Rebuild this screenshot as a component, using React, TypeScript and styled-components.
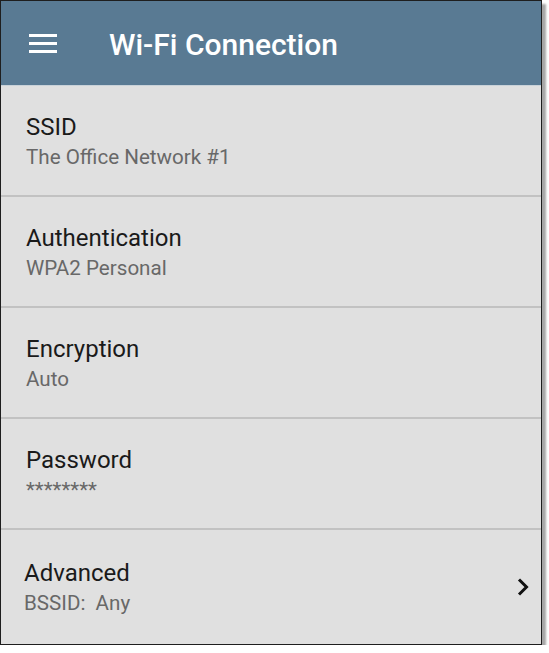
import React from "react";
import styled, { createGlobalStyle } from "styled-components";

const Global = createGlobalStyle`
  html, body { margin: 0; padding: 0; background: #ffffff; }
  body { font-family: Roboto, "Noto Sans", "Liberation Sans", sans-serif; }
  * { box-sizing: border-box; }
`;

const Frame = styled.div`
  width: 542px;
  height: 645px;
  border: 1px solid #1e1e1e;
  box-shadow: 4px 4px 2px rgba(0, 0, 0, 0.35);
  background: #e0e0e0;
  display: flex;
  flex-direction: column;
  overflow: hidden;
`;

const AppBar = styled.header`
  height: 85px;
  flex: none;
  background: #597a93;
  display: flex;
  align-items: center;
  padding-left: 28px;
  gap: 52px;
  border-bottom: 1px solid #c9d2d9;
`;

const MenuButton = styled.div`
  width: 28px;
  height: 19px;
  display: flex;
  flex-direction: column;
  justify-content: space-between;
`;

const MenuLine = styled.span`
  display: block;
  height: 3px;
  background: #ffffff;
`;

const Title = styled.h1`
  margin: 3px 0 0;
  color: #ffffff;
  font-size: 30px;
  font-weight: 500;
  line-height: 34px;
`;

const List = styled.div`
  display: flex;
  flex-direction: column;
  flex: 1;
`;

const Row = styled.div<{ $last?: boolean }>`
  height: ${(p) => (p.$last ? "auto" : "111px")};
  flex: ${(p) => (p.$last ? "1" : "none")};
  border-bottom: ${(p) => (p.$last ? "none" : "2px solid #c2c2c2")};
  display: flex;
  align-items: center;
  padding: ${(p) => (p.$last ? "0 12px 0 23px" : "2px 10px 0 25px")};
`;

const Texts = styled.div`
  flex: 1;
  display: flex;
  flex-direction: column;
  gap: 3px;
`;

const Label = styled.div`
  color: #1a1a1a;
  font-size: 24px;
  line-height: 28px;
`;

const Value = styled.div`
  color: #686868;
  font-size: 20.6px;
  line-height: 26px;
`;

const Chevron = styled.svg`
  width: 12px;
  height: 18px;
  flex: none;
`;

const items = [
  { label: "SSID", value: "The Office Network #1" },
  { label: "Authentication", value: "WPA2 Personal" },
  { label: "Encryption", value: "Auto" },
  { label: "Password", value: "********" },
];

export default function App() {
  return (
    <>
      <Global />
      <Frame>
        <AppBar>
          <MenuButton>
            <MenuLine />
            <MenuLine />
            <MenuLine />
          </MenuButton>
          <Title>Wi-Fi Connection</Title>
        </AppBar>
        <List>
          {items.map((it) => (
            <Row key={it.label}>
              <Texts>
                <Label>{it.label}</Label>
                <Value>{it.value}</Value>
              </Texts>
            </Row>
          ))}
          <Row $last>
            <Texts>
              <Label>Advanced</Label>
              <Value>BSSID:&nbsp; Any</Value>
            </Texts>
            <Chevron viewBox="0 0 12 18">
              <path d="M2 1.5 L9.5 9 L2 16.5" fill="none" stroke="#111" strokeWidth="3" />
            </Chevron>
          </Row>
        </List>
      </Frame>
    </>
  );
}
